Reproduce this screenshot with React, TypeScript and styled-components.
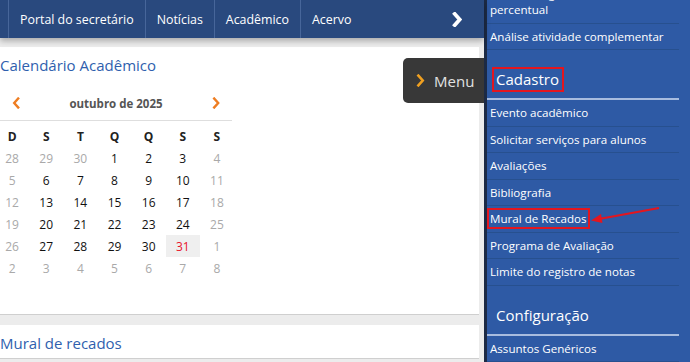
import React from 'react'
import styled, { createGlobalStyle } from 'styled-components'

const GlobalStyle = createGlobalStyle`
  html, body {
    margin: 0;
    padding: 0;
    background: #ececec;
    font-family: "Open Sans", "Noto Sans", Arial, sans-serif;
  }
  * { box-sizing: border-box; }
`

const Page = styled.div`
  display: flex;
  width: 690px;
  height: 362px;
  overflow: hidden;
  position: relative;
`

const Main = styled.div`
  position: relative;
  width: 484px;
  display: flex;
  flex-direction: column;
  background: #ececec;
`

const NavBar = styled.div`
  height: 38px;
  background: #29497e;
  display: flex;
  align-items: stretch;
  padding-left: 8px;
  box-shadow: 0 3px 6px rgba(0, 0, 0, 0.28);
  position: relative;
  z-index: 2;
`

const NavItem = styled.div`
  display: flex;
  align-items: center;
  padding: 0 11px;
  border-left: 1px solid #47669a;
  color: #fff;
  font-size: 12.4px;
  white-space: nowrap;
  &:last-of-type {
    border-right: 1px solid #47669a;
  }
`

const NavNext = styled.div`
  margin-left: auto;
  width: 40px;
  display: flex;
  align-items: center;
  justify-content: center;
  padding-right: 14px;
`

const Content = styled.div`
  padding: 9px 5px 0 0;
  display: flex;
  flex-direction: column;
  gap: 10px;
`

const Card = styled.div<{ $h: number }>`
  background: #fff;
  height: ${(p) => p.$h}px;
  border-bottom: 1px solid #cfcfcf;
  padding-top: 8px;
`

const CardTitle = styled.div`
  color: #2f5fae;
  font-size: 15px;
  line-height: 20px;
`

const Calendar = styled.div`
  width: 239px;
  margin-left: -5px;
  margin-top: 13px;
`

const MonthRow = styled.div`
  display: flex;
  align-items: center;
  justify-content: space-between;
  height: 33px;
  padding: 0 12px 2px 12px;
  border-bottom: 1px solid #dedede;
  margin-left: 5px;
  margin-right: 2px;
`

const MonthLabel = styled.div`
  font-weight: bold;
  font-size: 11.5px;
  color: #555;
`

const Grid = styled.div`
  display: grid;
  grid-template-columns: repeat(7, 1fr);
  grid-auto-rows: 22px;
  margin-top: 4px;
`

const HeadCell = styled.div`
  display: flex;
  align-items: center;
  justify-content: center;
  font-weight: bold;
  font-size: 12px;
  color: #222;
`

const DayCell = styled.div<{ $tone: 'cur' | 'off' | 'today' }>`
  display: flex;
  align-items: center;
  justify-content: center;
  font-size: 12px;
  color: ${(p) => (p.$tone === 'cur' ? '#111' : p.$tone === 'today' ? '#e8142c' : '#a9a9a9')};
  background: ${(p) => (p.$tone === 'today' ? '#efefef' : 'transparent')};
`

const MenuButton = styled.div`
  position: absolute;
  top: 58px;
  right: 0;
  width: 81px;
  height: 45px;
  background: #383838;
  border-radius: 5px 0 0 5px;
  display: flex;
  align-items: center;
  gap: 9px;
  padding-left: 13px;
  color: #e2e2e2;
  font-size: 15px;
  z-index: 3;
`

const Sidebar = styled.div`
  flex: 1;
  background: #2e5aa5;
  border-left: 3px solid #1c2a45;
  padding: 0 11px 0 0;
  color: #fff;
  position: relative;
  overflow: hidden;
`

const SideList = styled.div`
  margin-top: -19px;
`

const SideItem = styled.div`
  font-size: 11.6px;
  line-height: 16px;
  padding: 5px 3px 4.5px 3px;
  border-bottom: 1px solid #27508f;
  white-space: nowrap;
`

const ItemText = styled.span<{ $mark?: boolean }>`
  outline: ${(p) => (p.$mark ? '2px solid #e3161f' : 'none')};
  outline-offset: ${(p) => (p.$mark ? '1px' : '0')};
`

const SideHeader = styled.div`
  display: flex;
  font-size: 15px;
  padding: 17px 3px 6px 5px;
  border-bottom: 2px solid #a8bcdf;
`

const HeaderText = styled.span<{ $mark?: boolean }>`
  display: block;
  line-height: 19px;
  padding: 1px 3px 1px 2px;
  border: 2px solid ${(p) => (p.$mark ? '#e3161f' : 'transparent')};
`

const Arrow = styled.svg`
  position: absolute;
  left: 100px;
  top: 201px;
`

const Chevron = ({ color, dir = 'right', size = 12, w = 2.4 }: { color: string; dir?: 'left' | 'right'; size?: number; w?: number }) => (
  <svg width={size * 0.7} height={size} viewBox="0 0 7 12">
    <polyline
      points={dir === 'right' ? '1.5,1.5 5.5,6 1.5,10.5' : '5.5,1.5 1.5,6 5.5,10.5'}
      fill="none"
      stroke={color}
      strokeWidth={w}
      strokeLinecap="square"
    />
  </svg>
)

type Tone = 'cur' | 'off' | 'today'

const weekDays = ['D', 'S', 'T', 'Q', 'Q', 'S', 'S']

const buildDays = () => {
  const days: { n: number; tone: Tone }[] = []
  for (const n of [28, 29, 30]) days.push({ n, tone: 'off' })
  for (let n = 1; n <= 31; n++) {
    const col = days.length % 7
    let tone: Tone = col === 0 || col === 6 ? 'off' : 'cur'
    if (n === 31) tone = 'today'
    days.push({ n, tone })
  }
  let n = 1
  while (days.length < 42) days.push({ n: n++, tone: 'off' })
  return days
}

const cadastro = [
  'Evento acadêmico',
  'Solicitar serviços para alunos',
  'Avaliações',
  'Bibliografia',
  'Mural de Recados',
  'Programa de Avaliação',
  'Limite do registro de notas',
]

export default function App() {
  const days = buildDays()
  return (
    <>
      <GlobalStyle />
      <Page>
        <Main>
          <NavBar>
            <NavItem>Portal do secretário</NavItem>
            <NavItem>Notícias</NavItem>
            <NavItem>Acadêmico</NavItem>
            <NavItem>Acervo</NavItem>
            <NavNext>
              <Chevron color="#fff" size={15} w={3} />
            </NavNext>
          </NavBar>
          <Content>
            <Card $h={268}>
              <CardTitle>Calendário Acadêmico</CardTitle>
              <Calendar>
                <MonthRow>
                  <Chevron color="#ee7d22" dir="left" size={12} w={2.4} />
                  <MonthLabel>outubro de 2025</MonthLabel>
                  <Chevron color="#ee7d22" size={12} w={2.4} />
                </MonthRow>
                <Grid>
                  {weekDays.map((d, i) => (
                    <HeadCell key={i}>{d}</HeadCell>
                  ))}
                  {days.map((d, i) => (
                    <DayCell key={i} $tone={d.tone}>
                      {d.n}
                    </DayCell>
                  ))}
                </Grid>
              </Calendar>
            </Card>
            <Card $h={34}>
              <CardTitle>Mural de recados</CardTitle>
            </Card>
          </Content>
          <MenuButton>
            <Chevron color="#f0a020" size={13} w={2.4} />
            Menu
          </MenuButton>
        </Main>
        <Sidebar>
          <SideList>
            <SideItem>
              Análise carga horária
              <br />
              percentual
            </SideItem>
            <SideItem>Análise atividade complementar</SideItem>
            <SideHeader>
              <HeaderText $mark>Cadastro</HeaderText>
            </SideHeader>
            {cadastro.map((t) => (
              <SideItem key={t}>
                <ItemText $mark={t === 'Mural de Recados'}>{t}</ItemText>
              </SideItem>
            ))}
            <SideHeader>
              <HeaderText>Configuração</HeaderText>
            </SideHeader>
            <SideItem>Assuntos Genéricos</SideItem>
          </SideList>
          <Arrow width="80" height="30" viewBox="0 0 80 30">
            <line x1="72" y1="7" x2="12" y2="18" stroke="#e3161f" strokeWidth="2" />
            <polygon points="4,19.5 14,13 15.5,22" fill="#e3161f" />
          </Arrow>
        </Sidebar>
      </Page>
    </>
  )
}
